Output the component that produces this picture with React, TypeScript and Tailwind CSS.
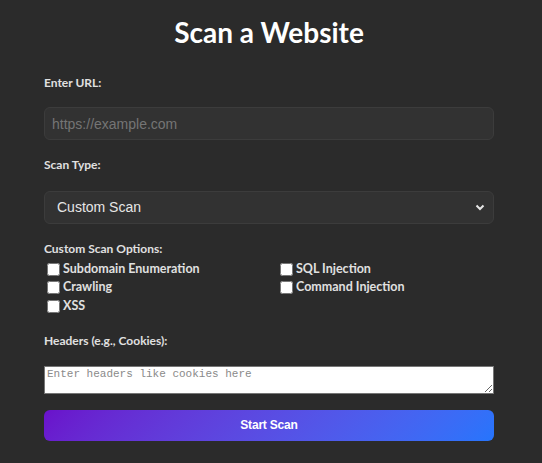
import { FC } from 'react';

const options = [
  ['Subdomain Enumeration', 'SQL Injection'],
  ['Crawling', 'Command Injection'],
  ['XSS', ''],
];

const labelCls = "block text-[12px] font-bold leading-4 text-[#e0e0e0] font-['Lato',sans-serif]";

const App: FC = () => {
  return (
    <div className="min-h-[463px] w-full bg-[#2b2b2b] font-['Lato',sans-serif]">
      <div className="ml-[44px] flex w-[450px] flex-col pt-4">
        <h1 className="text-center text-[28px] font-bold leading-8 text-white">
          Scan a Website
        </h1>

        <label className={`${labelCls} mt-[27px]`}>Enter URL:</label>
        <input
          type="text"
          placeholder="https://example.com"
          className="mt-4 h-[33px] w-full rounded-md border border-[#3c3c3c] bg-[#323232] pl-[7px] font-['Liberation_Sans',sans-serif] text-[14px] text-[#ddd] outline-none placeholder:text-[#757575]"
        />

        <label className={`${labelCls} mt-[17px]`}>Scan Type:</label>
        <div className="relative mt-[18px]">
          <select className="h-[33px] w-full appearance-none rounded-md border border-[#3c3c3c] bg-[#323232] px-3 font-['Liberation_Sans',sans-serif] text-[14px] text-[#e6e6e6] outline-none">
            <option>Custom Scan</option>
          </select>
          <svg
            className="pointer-events-none absolute right-[9px] top-[13px]"
            width="10"
            height="7"
            viewBox="0 0 10 7"
          >
            <path d="M1.5 1.5 L5 5 L8.5 1.5" stroke="#e6e6e6" strokeWidth="2" fill="none" />
          </svg>
        </div>

        <label className={`${labelCls} mt-[17px]`}>Custom Scan Options:</label>
        <div className="mt-[3px] grid grid-cols-[233px_1fr]">
          {options.flat().map((opt, i) =>
            opt ? (
              <label
                key={i}
                className="flex h-[18.5px] items-center gap-[3px] pl-[3px] text-[12.5px] font-bold text-[#e0e0e0]"
              >
                <input type="checkbox" className="m-0 h-[13px] w-[13px]" />
                <span>{opt}</span>
              </label>
            ) : (
              <span key={i} />
            )
          )}
        </div>

        <label className={`${labelCls} mt-[17px]`}>Headers (e.g., Cookies):</label>
        <textarea
          placeholder="Enter headers like cookies here"
          className="mt-[17px] h-[28px] w-full border border-[#767676] bg-white px-[2px] py-0 font-['Liberation_Mono',monospace] text-[11px] leading-[14px] text-black placeholder:text-[#8a8a8a]"
        />

        <button className="mt-4 h-[31px] w-full rounded-md bg-linear-135 from-[#6a11cb] to-[#2575fc] font-['Liberation_Sans',sans-serif] text-[12px] font-bold tracking-[-0.2px] text-white">
          Start Scan
        </button>
      </div>
    </div>
  );
};

export default App;
